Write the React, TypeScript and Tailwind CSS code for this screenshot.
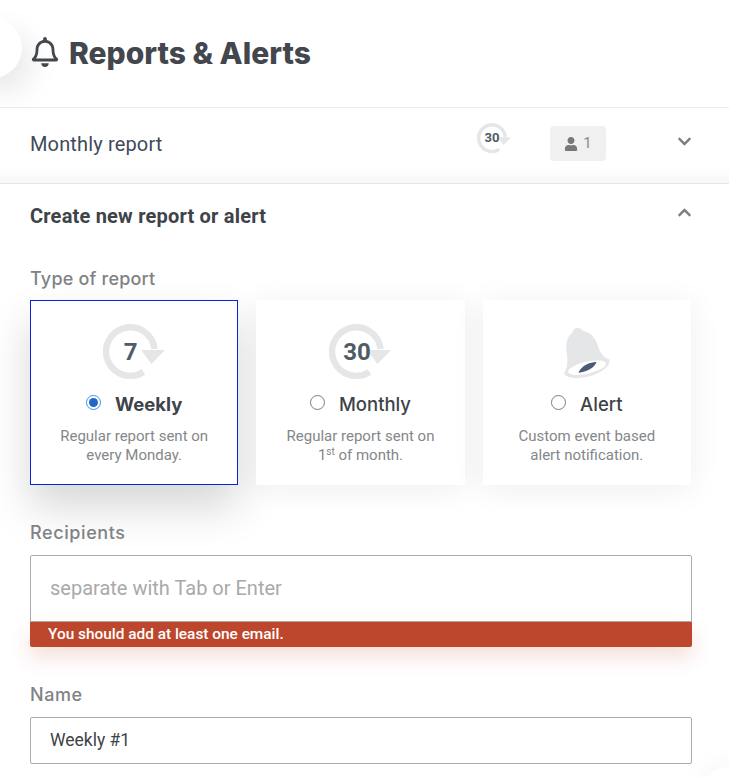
import React from "react";
import { FaRegBell, FaUser, FaChevronDown, FaChevronUp } from "react-icons/fa";

function Cycle({ label, size, fontClass }: { label: string; size: number; fontClass: string }) {
  return (
    <div className="relative shrink-0" style={{ width: size, height: (size * 55) / 62 }}>
      <svg viewBox="0 0 62 55" className="block h-full w-full">
        <path d="M40.5 48 A24.3 24.3 0 1 1 51.500 25" fill="none" stroke="#e4e6e7" strokeWidth="6.4" />
        <path d="M38 26 H62 L48.500 40 Z" fill="#e4e6e7" />
      </svg>
      <span className={`absolute top-0 left-0 flex h-full items-center justify-center font-bold text-[#4f5b67] ${fontClass}`} style={{ width: (size * 55) / 62 }}>
        {label}
      </span>
    </div>
  );
}

function AlertBell() {
  return (
    <svg viewBox="0 0 46 50" className="mt-[3px] -ml-[5px] block h-[50px] w-[46px] overflow-visible">
      <g transform="rotate(-13 23 25)">
        <path d="M21 0 C24 0 26 2 26.500 4 C34 7 37.500 14 38 23 C38.500 31 42 35 46 38 C46 45 34 50 21 50 C8 50 -1 46 -1 41 C3 37 5.500 31 6 22 C6.500 13 10 6 16 3.500 C17 1.500 19 0 21 0 Z" fill="#e4e6e7" />
        <ellipse cx="22.500" cy="41" rx="19.500" ry="6" fill="#ffffff" />
        <path d="M13 44 C17 37.500 27 36 33 37.500 C30 42.500 21 45 13 44 Z" fill="#4c5a72" />
      </g>
    </svg>
  );
}

function Radio({ checked }: { checked?: boolean }) {
  if (checked) {
    return (
      <span className="flex h-[15px] w-[15px] shrink-0 items-center justify-center rounded-full border-[1.5px] border-[#3f93e6] bg-white">
        <span className="h-[9px] w-[9px] rounded-full bg-[#2467c8]" />
      </span>
    );
  }
  return <span className="block h-[15px] w-[15px] shrink-0 rounded-full border border-[#7b7b7b] bg-white" />;
}

const heading = "font-['Inter','Liberation_Sans',sans-serif]";
const label = "font-['Inter','Liberation_Sans',sans-serif] text-[18px] leading-[24px] font-medium text-[#808285]";

function Card({ icon, title, checked, lines, selected }: { icon: React.ReactNode; title: string; checked?: boolean; lines: React.ReactNode; selected?: boolean }) {
  return (
    <div className={`flex h-[185px] flex-col items-center bg-white ${selected ? "border border-[#0a23d6] shadow-[0_22px_40px_rgba(0,0,0,0.16)]" : "shadow-[0_4px_30px_rgba(0,0,0,0.07)]"}`}>
      <div className={`flex h-[56px] items-start ${selected ? "mt-[23px]" : "mt-[24px]"}`}>{icon}</div>
      <div className="mt-[13px] flex h-[24px] items-center gap-[14px]">
        <span className="-mt-[5px] block shrink-0">
          <Radio checked={checked} />
        </span>
        <span className={`${heading} text-[18.500px] ${selected ? "font-bold" : "font-medium"} text-[#3e4349]`}>{title}</span>
      </div>
      <p className="mt-[10px] text-center text-[15px] leading-[19px] text-[#858789]">{lines}</p>
    </div>
  );
}

export default function App() {
  return (
    <div className="relative h-[777px] w-[729px] overflow-hidden bg-white font-['Roboto',sans-serif]">
      <div className="absolute top-[18px] -left-[38px] h-[60px] w-[60px] rounded-full bg-white shadow-[10px_14px_30px_rgba(0,0,0,0.09)]" />
      <div className="absolute -right-[30px] -bottom-[50px] h-[60px] w-[60px] rounded-full bg-white shadow-[0_0_30px_rgba(0,0,0,0.05)]" />

      <div className="relative">
        <header className="flex h-[108px] items-start gap-[9px] border-b border-[#ececec] pt-[37px] pl-[30px]">
          <FaRegBell size={30} color="#43474d" />
          <h1 className={`${heading} text-[30px] leading-[32px] font-extrabold text-[#43474d]`}>Reports &amp; Alerts</h1>
        </header>

        <div className="flex h-[76px] items-start border-b border-[#e6e6e6] bg-gradient-to-b from-white from-[78%] to-[#f7f7f7] pl-[30px]">
          <span className="mt-[21px] text-[20px] leading-[30px] tracking-[0.15px] text-[#3f4a5a]">Monthly report</span>
          <div className="mt-[15px] ml-auto">
            <Cycle label="30" size={34} fontClass="text-[13px]" />
          </div>
          <div className="mt-[18px] ml-[39px] flex h-[35px] w-[56px] items-center justify-center gap-[5px] rounded-[4px] bg-[#f0f0f0] text-[15px] text-[#8a8a8a]">
            <FaUser size={14} color="#77787a" />
            <span>1</span>
          </div>
          <div className="mt-[26px] mr-[37px] ml-[71px]">
            <FaChevronDown size={15} color="#7d7d7d" />
          </div>
        </div>

        <main className="pt-[19px] pr-[37px] pl-[30px]">
          <div className="flex h-[26px] items-center justify-between">
            <h2 className="text-[20px] font-bold tracking-[0.2px] text-[#3e4349]">Create new report or alert</h2>
            <div className="-mt-[8px]">
              <FaChevronUp size={15} color="#7d7d7d" />
            </div>
          </div>

          <div className={`${label} mt-[38px] tracking-[0.2px]`}>Type of report</div>

          <div className="mt-[9px] grid w-[661px] grid-cols-3 gap-[18px]">
            <Card selected icon={<Cycle label="7" size={62} fontClass="text-[24px]" />} title="Weekly" checked lines={<>Regular report sent on<br />every Monday.</>} />
            <Card icon={<Cycle label="30" size={62} fontClass="text-[24px]" />} title="Monthly" lines={<>Regular report sent on<br />1<sup className="text-[10px]">st</sup> of month.</>} />
            <Card icon={<AlertBell />} title="Alert" lines={<>Custom event based<br />alert notification.</>} />
          </div>

          <div className={`${label} mt-[36px] tracking-[0.6px]`}>Recipients</div>
          <div className="mt-[10px]">
            <input readOnly placeholder="separate with Tab or Enter" className="block h-[67px] w-full rounded-t-[2px] border border-[#ababab] bg-white px-[19px] pb-[2px] text-[20px] outline-none placeholder:text-[#a9a9a9]" />
            <div className="flex h-[25px] items-center rounded-b-[2px] bg-[#bc472d] pl-[18px] text-[15.400px] font-medium text-white shadow-[0_10px_20px_rgba(188,71,45,0.18)]">
              You should add at least one email.
            </div>
          </div>

          <div className={`${label} mt-[36px] tracking-[0.6px]`}>Name</div>
          <input readOnly defaultValue="Weekly #1" className="mt-[10px] block h-[47px] w-full rounded-[2px] border border-[#ababab] bg-white px-[19px] pb-[1px] text-[17.500px] text-[#3e4349] outline-none" />
        </main>
      </div>
    </div>
  );
}
